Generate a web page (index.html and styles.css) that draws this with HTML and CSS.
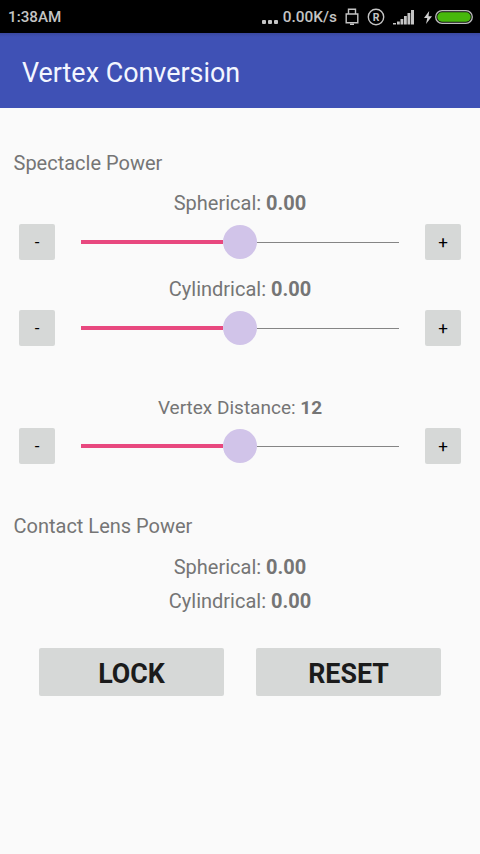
FILE: index.html
```html
<!DOCTYPE html>
<html lang="en">
<head>
<meta charset="utf-8">
<title>Vertex Conversion</title>
<link rel="stylesheet" href="styles.css">
</head>
<body>
<header class="status">
  <span class="clock">1:38AM</span>
  <span class="dots"><i></i><i></i><i></i></span>
  <span class="speed">0.00K/s</span>
  <svg class="usb" width="14" height="18" viewBox="0 0 14 18" fill="none" stroke="#c4c4c4" stroke-width="1.4"><path d="M3.5 6V1.2h7V6M1.2 6h11.6v8.8H1.2zM5 16.4h4"/></svg>
  <svg class="registered" width="18" height="18" viewBox="0 0 18 18"><circle cx="9" cy="9" r="7.7" fill="none" stroke="#c4c4c4" stroke-width="1.4"/><text x="9" y="12.8" text-anchor="middle">R</text></svg>
  <svg class="signal" width="22" height="16" viewBox="0 0 22 16" fill="#c4c4c4"><path d="M0 14h3v1.5H0zM4 12.5h2.8v3H4zM7.5 10h2.8v5.5H7.5zM11 7h2.8v8.5H11zM14.5 4h2.8v11.5h-2.8zM18 1h3v14.5h-3z"/></svg>
  <svg class="bolt" width="8" height="13" viewBox="0 0 8 13" fill="#d0d0d0"><path d="M5.2 0 0 7h3.3L2 13 8 5.3H4.5z"/></svg>
  <svg class="battery" width="38" height="14" viewBox="0 0 38 14"><rect x=".7" y=".7" width="36.6" height="12.6" rx="6.3" fill="#101010" stroke="#bdbdbd" stroke-width="1.3"/><rect x="2.3" y="2.3" width="33.4" height="9.4" rx="4.7" fill="#47b80c"/></svg>
</header>
<div class="appbar"><h1>Vertex Conversion</h1></div>
<main>
  <h2>Spectacle Power</h2>
  <section class="control">
    <p>Spherical: <b>0.00</b></p>
    <div class="row"><button class="step">-</button><div class="slider"><span class="filled"></span><span class="thumb"></span><span class="rest"></span></div><button class="step">+</button></div>
  </section>
  <section class="control">
    <p>Cylindrical: <b>0.00</b></p>
    <div class="row"><button class="step">-</button><div class="slider"><span class="filled"></span><span class="thumb"></span><span class="rest"></span></div><button class="step">+</button></div>
  </section>
  <section class="control distance">
    <p>Vertex Distance: <b>12</b></p>
    <div class="row"><button class="step">-</button><div class="slider"><span class="filled"></span><span class="thumb"></span><span class="rest"></span></div><button class="step">+</button></div>
  </section>
  <h2 class="contact">Contact Lens Power</h2>
  <section class="results">
    <p>Spherical: <b>0.00</b></p>
    <p>Cylindrical: <b>0.00</b></p>
  </section>
  <div class="actions"><button>LOCK</button><button>RESET</button></div>
</main>
</body>
</html>
```
FILE: styles.css
```css
* { box-sizing: border-box; margin: 0; padding: 0; }
body {
  width: 480px;
  min-height: 854px;
  background: #fafafa;
  color: #757575;
  font: 20px/24px Roboto, sans-serif;
}
.status {
  display: flex;
  align-items: center;
  height: 33px;
  padding: 1px 7px 0 8px;
  background: #000;
  color: #c4c4c4;
  font-size: 15px;
  font-weight: 500;
}
.clock { margin-right: auto; font-size: 15.2px; }
.speed { font-size: 15.4px; }
.dots { display: flex; gap: 2px; margin: 9px 5px 0 0; }
.dots i { width: 4px; height: 4px; border-radius: 1px; background: #c4c4c4; }
.usb { margin-left: 8px; }
.registered { margin-left: 8px; }
.registered text { font: 700 10.5px Roboto, sans-serif; fill: #c4c4c4; }
.signal { margin-left: 8px; }
.bolt { margin-left: 9px; }
.battery { margin-left: 3px; }
.appbar {
  display: flex;
  align-items: center;
  height: 75px;
  padding: 4px 22px 0;
  background: linear-gradient(#3a489f, #3f51b5 4px);
  color: #f3f6ff;
}
.appbar h1 { font-size: 26.9px; font-weight: 400; line-height: 32px; }
main { padding-top: 43px; }
h2 { padding-left: 13.5px; font-size: 20px; font-weight: 400; line-height: 24px; }
.control { padding-top: 16px; text-align: center; }
.control + .control { padding-top: 17px; }
.control p { height: 24px; margin-bottom: 9px; }
.row { display: flex; align-items: center; justify-content: space-between; padding: 0 19px; }
button { border: 0; background: #d6d8d7; color: #1b1b1b; font-family: Roboto, sans-serif; }
.step { width: 36px; height: 36px; border-radius: 2px; color: #000; font-size: 17px; line-height: 36px; }
.slider { display: flex; align-items: center; width: 318px; }
.filled { flex: 1; height: 4px; background: #e8487f; }
.thumb { width: 34px; height: 34px; border-radius: 50%; background: #d1c4e9; }
.rest { flex: 1; height: 1px; background: #858585; }
.control.distance { padding-top: 50px; font-size: 19px; }
.distance p { margin-bottom: 8px; }
.contact { padding-top: 50px; }
.results { display: grid; gap: 10px; padding-top: 17px; text-align: center; }
.actions { display: flex; gap: 32px; padding: 35px 39px 0; }
.actions button { flex: 1; height: 48px; border-radius: 2px; font-size: 26.8px; font-weight: 700; line-height: 32px; padding-top: 3px; }
```
